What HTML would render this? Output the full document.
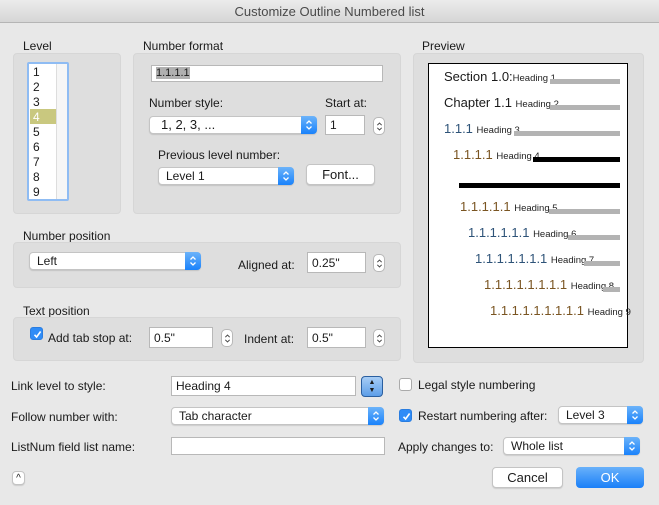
<!DOCTYPE html>
<html><head><meta charset="utf-8"><style>
*{box-sizing:border-box;margin:0;padding:0}
body{width:659px;height:505px;background:#e8e8e8;font-family:"Liberation Sans",Helvetica,sans-serif;font-size:12px;color:#1a1a1a;position:relative;overflow:hidden}
.a{position:absolute}
.title{left:0;top:0;width:659px;height:23px;background:linear-gradient(#ececec,#d6d6d6);border-bottom:1px solid #b5b5b5;text-align:center;line-height:24px;font-size:13px;color:#4a4a4a}
.grp{background:#dedede;border-radius:4px;border:1px solid #d6d6d6}
.fld{background:#fff;border:1px solid #b8b8b8;padding-left:4px;line-height:17px;font-size:12px}
.pop{background:#fff;border:1px solid #c4c4c4;border-radius:4px;padding-left:7px;line-height:16px;box-shadow:0 1px 1px rgba(0,0,0,.12)}
.pop:after{content:"";position:absolute;right:-1px;top:-1px;bottom:-1px;width:16px;background:linear-gradient(#6cb3fa,#1a82fb);border-radius:0 4px 4px 0}
.pop svg{position:absolute;right:3px;top:50%;margin-top:-6px;z-index:2}
.stp{width:12px;height:18px;background:#fff;border:1px solid #b8b8b8;border-radius:5px}
.stp svg{position:absolute;left:2px;top:3px}
.btn{background:#fff;border:1px solid #c4c4c4;border-radius:4px;text-align:center;font-size:13px;box-shadow:0 1px 1px rgba(0,0,0,.12)}
.cb{width:13px;height:13px;border-radius:3px;border:1px solid #aaa;background:#fff}
.cb.on{background:#2f8cf7;border-color:#2a7de0}
.cb svg{position:absolute;left:1px;top:1px}
.pv{font-size:13px;white-space:nowrap}
.pv small{font-size:9.5px;color:#222}
.bar{background:#b3b3b3;height:5px}
.blk{background:#000;height:5px}
.bl{color:#2e5378}.br{color:#7a5522}
</style></head><body>
<svg width="0" height="0" style="position:absolute"><defs>
<symbol id="ud" viewBox="0 0 8 12"><path d="M1.5 4.5L4 2L6.5 4.5M1.5 7.5L4 10L6.5 7.5" fill="none" stroke="#fff" stroke-width="1.3"/></symbol>
<symbol id="ud2" viewBox="0 0 8 12"><path d="M1.5 4.5L4 2L6.5 4.5M1.5 7.5L4 10L6.5 7.5" fill="none" stroke="#444" stroke-width="1.1"/></symbol>
<symbol id="ck" viewBox="0 0 11 11"><path d="M2.5 5.8L4.6 8L8.6 2.5" fill="none" stroke="#fff" stroke-width="1.6"/></symbol>
</defs></svg>
<div class="a title">Customize Outline Numbered list</div>

<div class="a" style="left:23px;top:39px">Level</div>
<div class="a grp" style="left:13px;top:53px;width:108px;height:161px"></div>
<div class="a" style="left:27px;top:62px;width:42px;height:139px;border:2px solid #8fbcf3;border-radius:2px;background:#fff"></div>
<div class="a" style="left:56px;top:64px;width:11px;height:135px;border-left:1px solid #ddd;background:#f6f6f6"></div>
<div class="a" style="left:30px;top:109px;width:26px;height:15px;background:#c9c87f"></div>
<div class="a" style="left:33px;top:65px;line-height:15px;font-size:12px">1<br>2<br>3<br><span style="color:#fff">4</span><br>5<br>6<br>7<br>8<br>9</div>

<div class="a" style="left:143px;top:39px">Number format</div>
<div class="a grp" style="left:133px;top:53px;width:268px;height:161px"></div>
<div class="a fld" style="left:151px;top:65px;width:232px;height:17px;font-size:11px;line-height:15px"><span style="background:#b0b0b0">1.1.1.1</span></div>
<div class="a" style="left:149px;top:96px">Number style:</div>
<div class="a pop" style="left:149px;top:116px;width:168px;height:18px;font-size:13px;padding-left:11px">1, 2, 3, ...<svg width="8" height="12"><use href="#ud"/></svg></div>
<div class="a" style="left:325px;top:96px">Start at:</div>
<div class="a fld" style="left:325px;top:115px;width:40px;height:20px;line-height:19px">1</div>
<div class="a stp" style="left:373px;top:117px"><svg width="7" height="11"><use href="#ud2"/></svg></div>
<div class="a" style="left:158px;top:148px">Previous level number:</div>
<div class="a pop" style="left:158px;top:167px;width:136px;height:18px">Level 1<svg width="8" height="12"><use href="#ud"/></svg></div>
<div class="a btn" style="left:306px;top:164px;width:69px;height:21px;line-height:19px">Font...</div>

<div class="a" style="left:422px;top:39px">Preview</div>
<div class="a grp" style="left:413px;top:53px;width:231px;height:310px"></div>
<div class="a" style="left:428px;top:63px;width:200px;height:285px;background:#fff;border:1px solid #000"></div>
<div class="a pv" style="left:444px;top:69px">Section 1.0:<small>Heading 1</small></div><div class="a bar" style="left:550px;top:79px;width:70px"></div>
<div class="a pv" style="left:444px;top:95px">Chapter 1.1 <small>Heading 2</small></div><div class="a bar" style="left:550px;top:105px;width:70px"></div>
<div class="a pv bl" style="left:444px;top:121px">1.1.1 <small>Heading 3</small></div><div class="a bar" style="left:514px;top:131px;width:106px"></div>
<div class="a pv br" style="left:453px;top:147px">1.1.1.1 <small>Heading 4</small></div><div class="a blk" style="left:533px;top:157px;width:87px"></div>
<div class="a blk" style="left:459px;top:183px;width:161px"></div>
<div class="a pv br" style="left:460px;top:199px">1.1.1.1.1 <small>Heading 5</small></div><div class="a bar" style="left:549px;top:209px;width:71px"></div>
<div class="a pv bl" style="left:468px;top:225px">1.1.1.1.1.1 <small>Heading 6</small></div><div class="a bar" style="left:568px;top:235px;width:52px"></div>
<div class="a pv bl" style="left:475px;top:251px">1.1.1.1.1.1.1 <small>Heading 7</small></div><div class="a bar" style="left:584px;top:261px;width:36px"></div>
<div class="a pv br" style="left:484px;top:277px">1.1.1.1.1.1.1.1 <small>Heading 8</small></div><div class="a bar" style="left:603px;top:287px;width:17px"></div>
<div class="a pv br" style="left:490px;top:303px">1.1.1.1.1.1.1.1.1 <small>Heading 9</small></div>

<div class="a" style="left:23px;top:229px">Number position</div>
<div class="a grp" style="left:13px;top:242px;width:388px;height:46px"></div>
<div class="a pop" style="left:29px;top:252px;width:172px;height:18px">Left<svg width="8" height="12"><use href="#ud"/></svg></div>
<div class="a" style="left:238px;top:258px">Aligned at:</div>
<div class="a fld" style="left:307px;top:252px;width:59px;height:21px;line-height:20px">0.25"</div>
<div class="a stp" style="left:373px;top:254px"><svg width="7" height="11"><use href="#ud2"/></svg></div>

<div class="a" style="left:23px;top:304px">Text position</div>
<div class="a grp" style="left:13px;top:317px;width:388px;height:44px"></div>
<div class="a cb on" style="left:30px;top:327px"><svg width="11" height="11"><use href="#ck"/></svg></div>
<div class="a" style="left:48px;top:331px">Add tab stop at:</div>
<div class="a fld" style="left:149px;top:327px;width:64px;height:21px;line-height:20px">0.5"</div>
<div class="a stp" style="left:221px;top:329px"><svg width="7" height="11"><use href="#ud2"/></svg></div>
<div class="a" style="left:244px;top:332px">Indent at:</div>
<div class="a fld" style="left:307px;top:327px;width:59px;height:21px;line-height:20px">0.5"</div>
<div class="a stp" style="left:373px;top:329px"><svg width="7" height="11"><use href="#ud2"/></svg></div>

<div class="a" style="left:11px;top:379px">Link level to style:</div>
<div class="a fld" style="left:171px;top:376px;width:185px;height:20px;line-height:18px">Heading 4</div>
<div class="a" style="left:361px;top:376px;width:22px;height:21px;border:1px solid #2a5fa0;border-radius:4px;background:linear-gradient(#a8cdf5,#5d9ee8);font-size:7px;text-align:center;line-height:8px;padding-top:2px">▲<br>▼</div>
<div class="a cb" style="left:399px;top:378px"></div>
<div class="a" style="left:418px;top:378px">Legal style numbering</div>

<div class="a" style="left:11px;top:410px">Follow number with:</div>
<div class="a pop" style="left:171px;top:407px;width:213px;height:18px">Tab character<svg width="8" height="12"><use href="#ud"/></svg></div>
<div class="a cb on" style="left:399px;top:409px"><svg width="11" height="11"><use href="#ck"/></svg></div>
<div class="a" style="left:418px;top:409px">Restart numbering after:</div>
<div class="a pop" style="left:558px;top:406px;width:85px;height:18px">Level 3<svg width="8" height="12"><use href="#ud"/></svg></div>

<div class="a" style="left:11px;top:440px">ListNum field list name:</div>
<div class="a fld" style="left:171px;top:437px;width:214px;height:18px"></div>
<div class="a" style="left:398px;top:440px">Apply changes to:</div>
<div class="a pop" style="left:503px;top:437px;width:137px;height:18px">Whole list<svg width="8" height="12"><use href="#ud"/></svg></div>

<div class="a btn" style="left:12px;top:471px;width:13px;height:14px;font-size:10px;line-height:14px">^</div>
<div class="a btn" style="left:492px;top:467px;width:71px;height:21px;line-height:19px">Cancel</div>
<div class="a" style="left:576px;top:467px;width:68px;height:21px;border-radius:4px;background:linear-gradient(#69b1fa,#1a7ff8);color:#fff;text-align:center;line-height:21px;font-size:13px">OK</div>
</body></html>
